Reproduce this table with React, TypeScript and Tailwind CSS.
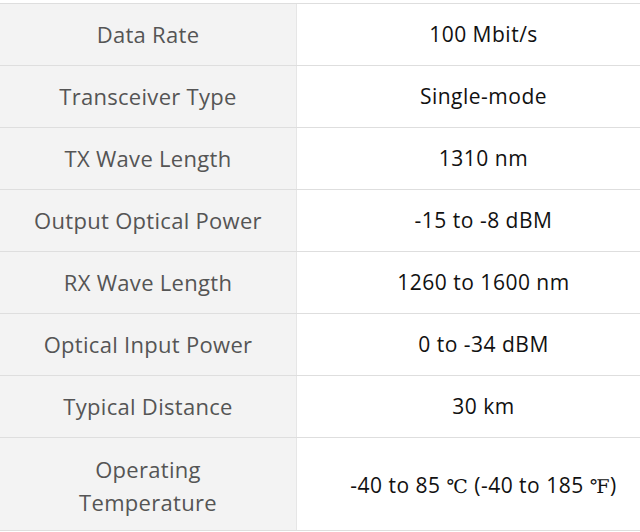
const rows: [string, string][] = [
  ['Data Rate', '100 Mbit/s'],
  ['Transceiver Type', 'Single-mode'],
  ['TX Wave Length', '1310 nm'],
  ['Output Optical Power', '-15 to -8 dBM'],
  ['RX Wave Length', '1260 to 1600 nm'],
  ['Optical Input Power', '0 to -34 dBM'],
  ['Typical Distance', '30 km'],
];

function Row({ label, value }: { label: string; value: string }) {
  return (
    <div className="grid grid-cols-[297px_373px] border-b border-[#dedede]">
      <div className="h-[61px] flex items-center justify-center bg-[#f3f3f3] border-r border-[#e6e6e6] text-[#555] text-[22px] tracking-[0.3px]">
        {label}
      </div>
      <div className="h-[61px] flex items-center justify-center text-[#111] text-[21px] tracking-[0.5px]">{value}</div>
    </div>
  );
}

export default function App() {
  return (
    <div className="w-[640px] h-[532px] overflow-hidden bg-white pt-[3px] font-['Open_Sans',sans-serif]">
      <div className="w-[670px] border-t border-[#dedede]">
        {rows.map(([l, v]) => (
          <Row key={l} label={l} value={v} />
        ))}
        <div className="grid grid-cols-[297px_373px] border-b border-[#dedede]">
          <div className="h-[92px] pt-[4px] flex flex-col items-center justify-center bg-[#f3f3f3] border-r border-[#e6e6e6] text-[#555] text-[22px] tracking-[0.3px] leading-[33px] text-center">
            <span>Operating</span>
            <span>Temperature</span>
          </div>
          <div className="h-[92px] pt-[3px] flex items-center justify-center text-[#111] text-[21px] tracking-[0.5px]">
            <span>
              -40 to 85 <span className="font-['DejaVu_Serif',serif] text-[19px] font-light">℃</span> (-40 to 185{' '}
              <span className="font-['DejaVu_Serif',serif] text-[19px] font-light">℉</span>)
            </span>
          </div>
        </div>
      </div>
    </div>
  );
}
